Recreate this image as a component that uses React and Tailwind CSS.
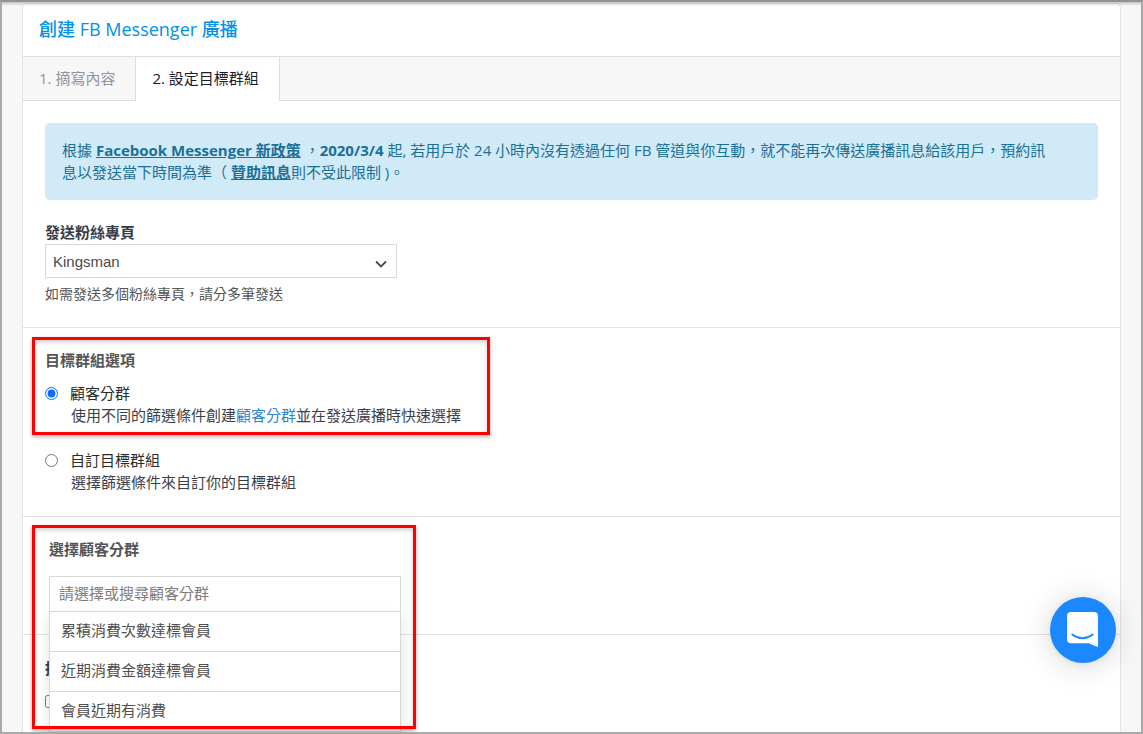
import React, { useState } from 'react';

const OPCOES_GRUPO = ['累積消費次數達標會員', '近期消費金額達標會員', '會員近期有消費'];

function Destaque({ className }) {
  return (
    <div className={`absolute z-20 border-3 border-[#ff0000] pointer-events-none shadow-[0_2px_4px_rgba(0,0,0,0.3),inset_0_2px_4px_rgba(0,0,0,0.2)] ${className}`}></div>
  );
}

function OpcaoRadio({ id, titulo, checked, onChange, children }) {
  return (
    <div className="flex items-start gap-3">
      <input
        type="radio"
        id={id}
        name="target"
        checked={checked}
        onChange={onChange}
        className="w-[13px] h-[13px] mt-[5px] shrink-0 accent-[#0a6cff]"
      />
      <div className="leading-[22px]">
        <label htmlFor={id} className="block text-[#2b2b2b]">{titulo}</label>
        <p className="pl-px text-[#3b3f4a]">{children}</p>
      </div>
    </div>
  );
}

function BotaoChat() {
  return (
    <button
      type="button"
      aria-label="Messenger"
      className="absolute z-30 right-[25px] bottom-[69px] w-[66px] h-[66px] rounded-full bg-[#1c88ff] flex items-center justify-center shadow-[0_1px_6px_rgba(0,0,0,0.06),0_2px_32px_rgba(0,0,0,0.16)]"
    >
      <svg width="32" height="36" viewBox="0 0 32 36" fill="none">
        <path d="M4 0H27Q31 0 31 4V35Q26.500 33.800 22 31.300H4Q0 31.300 0 27.300V4Q0 0 4 0Z" fill="#fff" />
        <path d="M5.200 22.500Q15.500 30 25.800 22.500" stroke="#1c88ff" strokeWidth="1.800" strokeLinecap="round" />
      </svg>
    </button>
  );
}

export default function App() {
  const [alvo, setAlvo] = useState('segment');
  const [busca, setBusca] = useState('');

  return (
    <div
      lang="zh-Hant"
      className="relative h-screen overflow-hidden border-2 border-[#a9a9a9] border-t-[#929292] bg-[#f7f7f7] px-5 pt-px text-[15px] leading-[22px] font-['Open_Sans','Noto_Sans_CJK_TC',sans-serif]"
    >
      <div className="absolute z-10 inset-x-0 top-0 h-1 bg-linear-to-b from-black/20 to-transparent pointer-events-none"></div>

      <main className="min-h-full bg-white border border-b-0 border-[#e4e4e4] rounded-t-[5px]">
        <h1 className="h-[52px] px-4 pb-0.5 flex items-center text-lg font-medium text-[#0091e8]">創建 FB Messenger 廣播</h1>

        <nav className="flex h-[45px] bg-[#f7f7f7] border-y border-[#dedede]">
          <button type="button" className="pl-4 pr-5 pb-0.5 text-[#9292a6]">1. 摘寫內容</button>
          <button type="button" className="-mb-px pl-4 pr-5 pb-0.5 bg-white border-x border-[#dedede] text-[#1d2029]">2. 設定目標群組</button>
        </nav>

        <section className="px-[22px] pt-[22px] pb-[22px] border-b border-[#e4e4e4]">
          <div className="rounded-[5px] bg-[#d1eaf7] text-[#1a7096] pl-[17px] pr-10 pt-4 pb-[17px]">
            根據 <a href="#policy" className="font-bold underline">Facebook Messenger 新政策</a> ，<b>2020/3/4</b> 起, 若用戶於 24 小時內沒有透過任何 FB 管道與你互動，就不能再次傳送廣播訊息給該用戶，預約訊息以發送當下時間為準（ <a href="#sponsored" className="font-bold underline">贊助訊息</a>則不受此限制 )。
          </div>

          <label htmlFor="page" className="block mt-[21px] mb-px font-bold text-[#363b48]">發送粉絲專頁</label>
          <div className="relative w-[352px]">
            <select
              id="page"
              className="block w-full h-[34px] appearance-none border border-[#d8d8d8] bg-white px-[7px] pt-px text-[#4a4a4a] font-['Liberation_Sans',sans-serif]"
            >
              <option>Kingsman</option>
            </select>
            <svg className="absolute right-[10px] top-4 pointer-events-none" width="12" height="9" viewBox="0 0 12 9" fill="none">
              <path d="M1 1.500L6 6.500L11 1.500" stroke="#4a4a4a" strokeWidth="1.800" />
            </svg>
          </div>
          <p className="mt-[5px] text-sm leading-[22px] text-[#555]">如需發送多個粉絲專頁，請分多筆發送</p>
        </section>

        <section className="relative px-[22px] pt-[21px] pb-[23px] border-b border-[#e4e4e4]">
          <h2 className="font-bold text-[#555]">目標群組選項</h2>
          <div className="mt-[11px] flex flex-col gap-[23px]">
            <OpcaoRadio id="segment" titulo="顧客分群" checked={alvo === 'segment'} onChange={() => setAlvo('segment')}>
              使用不同的篩選條件創建<a href="#segments" className="text-[#2d86cf]">顧客分群</a>並在發送廣播時快速選擇
            </OpcaoRadio>
            <OpcaoRadio id="custom" titulo="自訂目標群組" checked={alvo === 'custom'} onChange={() => setAlvo('custom')}>
              選擇篩選條件來自訂你的目標群組
            </OpcaoRadio>
          </div>
          <Destaque className="left-[9px] top-[9px] w-[458px] h-[98px]" />
        </section>

        <section className="relative px-[26px] pt-[21px] pb-[22px] border-b border-[#e4e4e4]">
          <label htmlFor="search" className="block font-bold text-[#555]">選擇顧客分群</label>
          <div className="relative mt-4 w-[352px]">
            <input
              id="search"
              type="text"
              value={busca}
              onChange={(e) => setBusca(e.target.value)}
              placeholder="請選擇或搜尋顧客分群"
              className="block w-full h-9 border border-[#d8d8d8] bg-white px-[9px] pb-0.5 text-[#4a4a4a] placeholder:text-[#7d7d7d]"
            />
            <ul className="absolute z-10 top-[35px] inset-x-0 pb-4 bg-white border border-[#d8d8d8] shadow-[0_6px_12px_rgba(0,0,0,0.12)]">
              {OPCOES_GRUPO.map((nome) => (
                <li key={nome} className="h-10 px-[11px] pb-1 flex items-center border-b border-[#d8d8d8] text-[#4f4f4f]">{nome}</li>
              ))}
            </ul>
          </div>
          <Destaque className="left-[9px] top-2 w-[384px] h-[204px]" />
        </section>

        <section className="px-[22px] pt-[22px]">
          <h2 className="font-bold text-[#363b48]">推播</h2>
          <input type="checkbox" aria-label="推播" className="block mt-4 w-[13px] h-[13px]" />
        </section>
      </main>

      <BotaoChat />
    </div>
  );
}
